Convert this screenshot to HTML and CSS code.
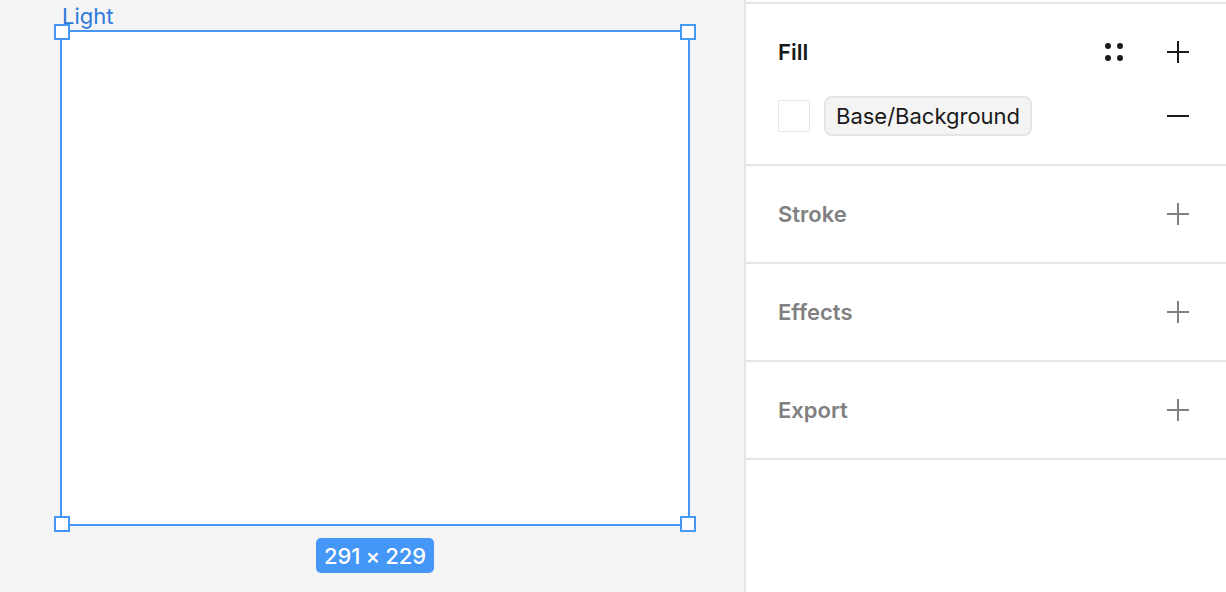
FILE: index.html
```html
<!DOCTYPE html>
<html lang="en">
<head>
<meta charset="utf-8">
<meta name="viewport" content="width=device-width, initial-scale=1">
<title>Light</title>
<link rel="stylesheet" href="styles.css">
</head>
<body>
<div class="editor">
  <main class="canvas">
    <div class="frame-label">Light</div>
    <div class="frame">
      <span class="handle handle-tl"></span>
      <span class="handle handle-tr"></span>
      <span class="handle handle-bl"></span>
      <span class="handle handle-br"></span>
    </div>
    <div class="size-badge"><span>291</span> <span>×</span> <span>229</span></div>
  </main>
  <aside class="panel">
    <section class="section section-active">
      <div class="row">
        <h2 class="title">Fill</h2>
        <div class="actions">
          <button class="icon-button" type="button" aria-label="Fill styles">
            <svg viewBox="0 0 32 32" class="icon"><g fill="currentColor"><circle cx="10" cy="10" r="3"/><circle cx="22" cy="10" r="3"/><circle cx="10" cy="22" r="3"/><circle cx="22" cy="22" r="3"/></g></svg>
          </button>
          <button class="icon-button" type="button" aria-label="Add fill">
            <svg viewBox="0 0 32 32" class="icon"><path d="M5 16h22M16 5v22" stroke="currentColor" stroke-width="2"/></svg>
          </button>
        </div>
      </div>
      <div class="row">
        <div class="style">
          <button class="swatch" type="button" aria-label="Fill color"></button>
          <button class="chip" type="button">Base/Background</button>
        </div>
        <button class="icon-button" type="button" aria-label="Remove fill">
          <svg viewBox="0 0 32 32" class="icon"><path d="M5 16h22" stroke="currentColor" stroke-width="2"/></svg>
        </button>
      </div>
    </section>
    <section class="section">
      <div class="row">
        <h2 class="title">Stroke</h2>
        <button class="icon-button" type="button" aria-label="Add stroke">
          <svg viewBox="0 0 32 32" class="icon"><path d="M5 16h22M16 5v22" stroke="currentColor" stroke-width="2"/></svg>
        </button>
      </div>
    </section>
    <section class="section">
      <div class="row">
        <h2 class="title">Effects</h2>
        <button class="icon-button" type="button" aria-label="Add effect">
          <svg viewBox="0 0 32 32" class="icon"><path d="M5 16h22M16 5v22" stroke="currentColor" stroke-width="2"/></svg>
        </button>
      </div>
    </section>
    <section class="section">
      <div class="row">
        <h2 class="title">Export</h2>
        <button class="icon-button" type="button" aria-label="Add export">
          <svg viewBox="0 0 32 32" class="icon"><path d="M5 16h22M16 5v22" stroke="currentColor" stroke-width="2"/></svg>
        </button>
      </div>
    </section>
  </aside>
</div>
</body>
</html>
```

FILE: styles.css
```css
* {
  box-sizing: border-box;
}

body {
  margin: 0;
  font-family: Inter, "Liberation Sans", sans-serif;
  font-size: 22px;
  line-height: 32px;
  color: #1a1a1a;
  background: #fff;
}

.editor {
  display: flex;
  min-height: 100vh;
}

/* Canvas with the selected frame */
.canvas {
  flex: 1;
  display: flex;
  flex-direction: column;
  padding: 0 54px 19px 60px;
  background: #f4f4f4;
}

.frame-label {
  height: 30px;
  padding-left: 2px;
  color: #2f78dc;
}

.frame {
  position: relative;
  flex: 1;
  border: 2px solid #4597f7;
  background: #fff;
}

.handle {
  position: absolute;
  width: 16px;
  height: 16px;
  border: 2px solid #4597f7;
  background: #fff;
}

.handle-tl { top: -8px; left: -8px; }
.handle-tr { top: -8px; right: -8px; }
.handle-bl { bottom: -8px; left: -8px; }
.handle-br { bottom: -8px; right: -8px; }

.size-badge {
  align-self: center;
  display: flex;
  gap: 5px;
  margin-top: 12px;
  padding: 2px 8px 1px;
  border-radius: 5px;
  background: #4597f7;
  color: #fff;
  font-weight: 500;
}

/* Properties panel */
.panel {
  flex: 0 0 482px;
  padding-top: 2px;
  border-left: 2px solid #e5e5e5;
}

.section {
  display: flex;
  flex-direction: column;
  gap: 28px;
  padding: 32px;
  border-bottom: 2px solid #e5e5e5;
  color: #808080;
}

.section-active {
  padding-bottom: 28px;
  border-top: 2px solid #e5e5e5;
  color: #1a1a1a;
}

.row,
.actions,
.style {
  display: flex;
  align-items: center;
}

.row {
  justify-content: space-between;
}

.actions {
  gap: 32px;
}

.style {
  gap: 14px;
}

.title {
  margin: 0;
  font-size: 22px;
  font-weight: 600;
}

.icon-button,
.swatch,
.chip {
  margin: 0;
  padding: 0;
  border: 0;
  background: none;
  color: inherit;
  font: inherit;
}

.icon-button,
.icon {
  display: block;
  width: 32px;
  height: 32px;
}

.swatch {
  width: 32px;
  height: 32px;
  border: 1px solid #e3e3e3;
  border-radius: 1px;
  background: #fff;
}

.chip {
  padding: 2px 10px;
  border: 2px solid #e5e5e5;
  border-radius: 8px;
  background: #f4f4f4;
}
```
